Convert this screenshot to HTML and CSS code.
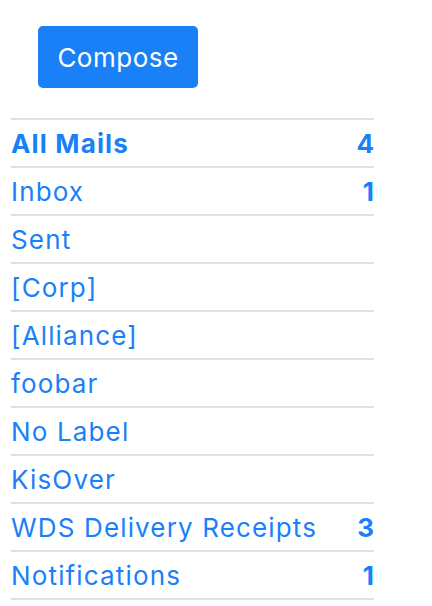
FILE: index.html
```html
<!DOCTYPE html>
<html>
<head>
<meta charset="utf-8">
<link rel="stylesheet" href="styles.css">
</head>
<body>
<div class="sidebar">
  <div class="compose-wrap"><button class="compose">Compose</button></div>
  <ul class="folders">
    <li class="folder active"><span class="name">All Mails</span><span class="count">4</span></li>
    <li class="folder"><span class="name">Inbox</span><span class="count">1</span></li>
    <li class="folder"><span class="name">Sent</span></li>
    <li class="folder"><span class="name">[Corp]</span></li>
    <li class="folder"><span class="name">[Alliance]</span></li>
    <li class="folder"><span class="name">foobar</span></li>
    <li class="folder"><span class="name">No Label</span></li>
    <li class="folder"><span class="name">KisOver</span></li>
    <li class="folder"><span class="name">WDS Delivery Receipts</span><span class="count">3</span></li>
    <li class="folder"><span class="name">Notifications</span><span class="count">1</span></li>
  </ul>
</div>
</body>
</html>
```
FILE: styles.css
```css
html, body {
  margin: 0;
  padding: 0;
  background: #ffffff;
}
body {
  font-family: Inter, "Noto Sans", sans-serif;
  color: #1a80f8;
}
.sidebar {
  padding: 26px 0 0 11px;
  width: 363px;
}
.compose-wrap {
  padding-left: 27px;
  margin-bottom: 30px;
}
.compose {
  width: 160px;
  height: 62px;
  background: #1a80f8;
  color: #ffffff;
  border: none;
  border-radius: 5px;
  font-family: inherit;
  font-size: 26px;
  letter-spacing: 0.5px;
  padding: 0;
}
.folders {
  list-style: none;
  margin: 0;
  padding: 0;
  border-top: 2px solid #e0e0e0;
}
.folder {
  display: flex;
  justify-content: space-between;
  align-items: center;
  height: 46px;
  border-bottom: 2px solid #e0e0e0;
  font-size: 26px;
  letter-spacing: 1.15px;
}
.folder.active .name {
  font-weight: 700;
}
.count {
  font-weight: 700;
  letter-spacing: 0;
}
```
